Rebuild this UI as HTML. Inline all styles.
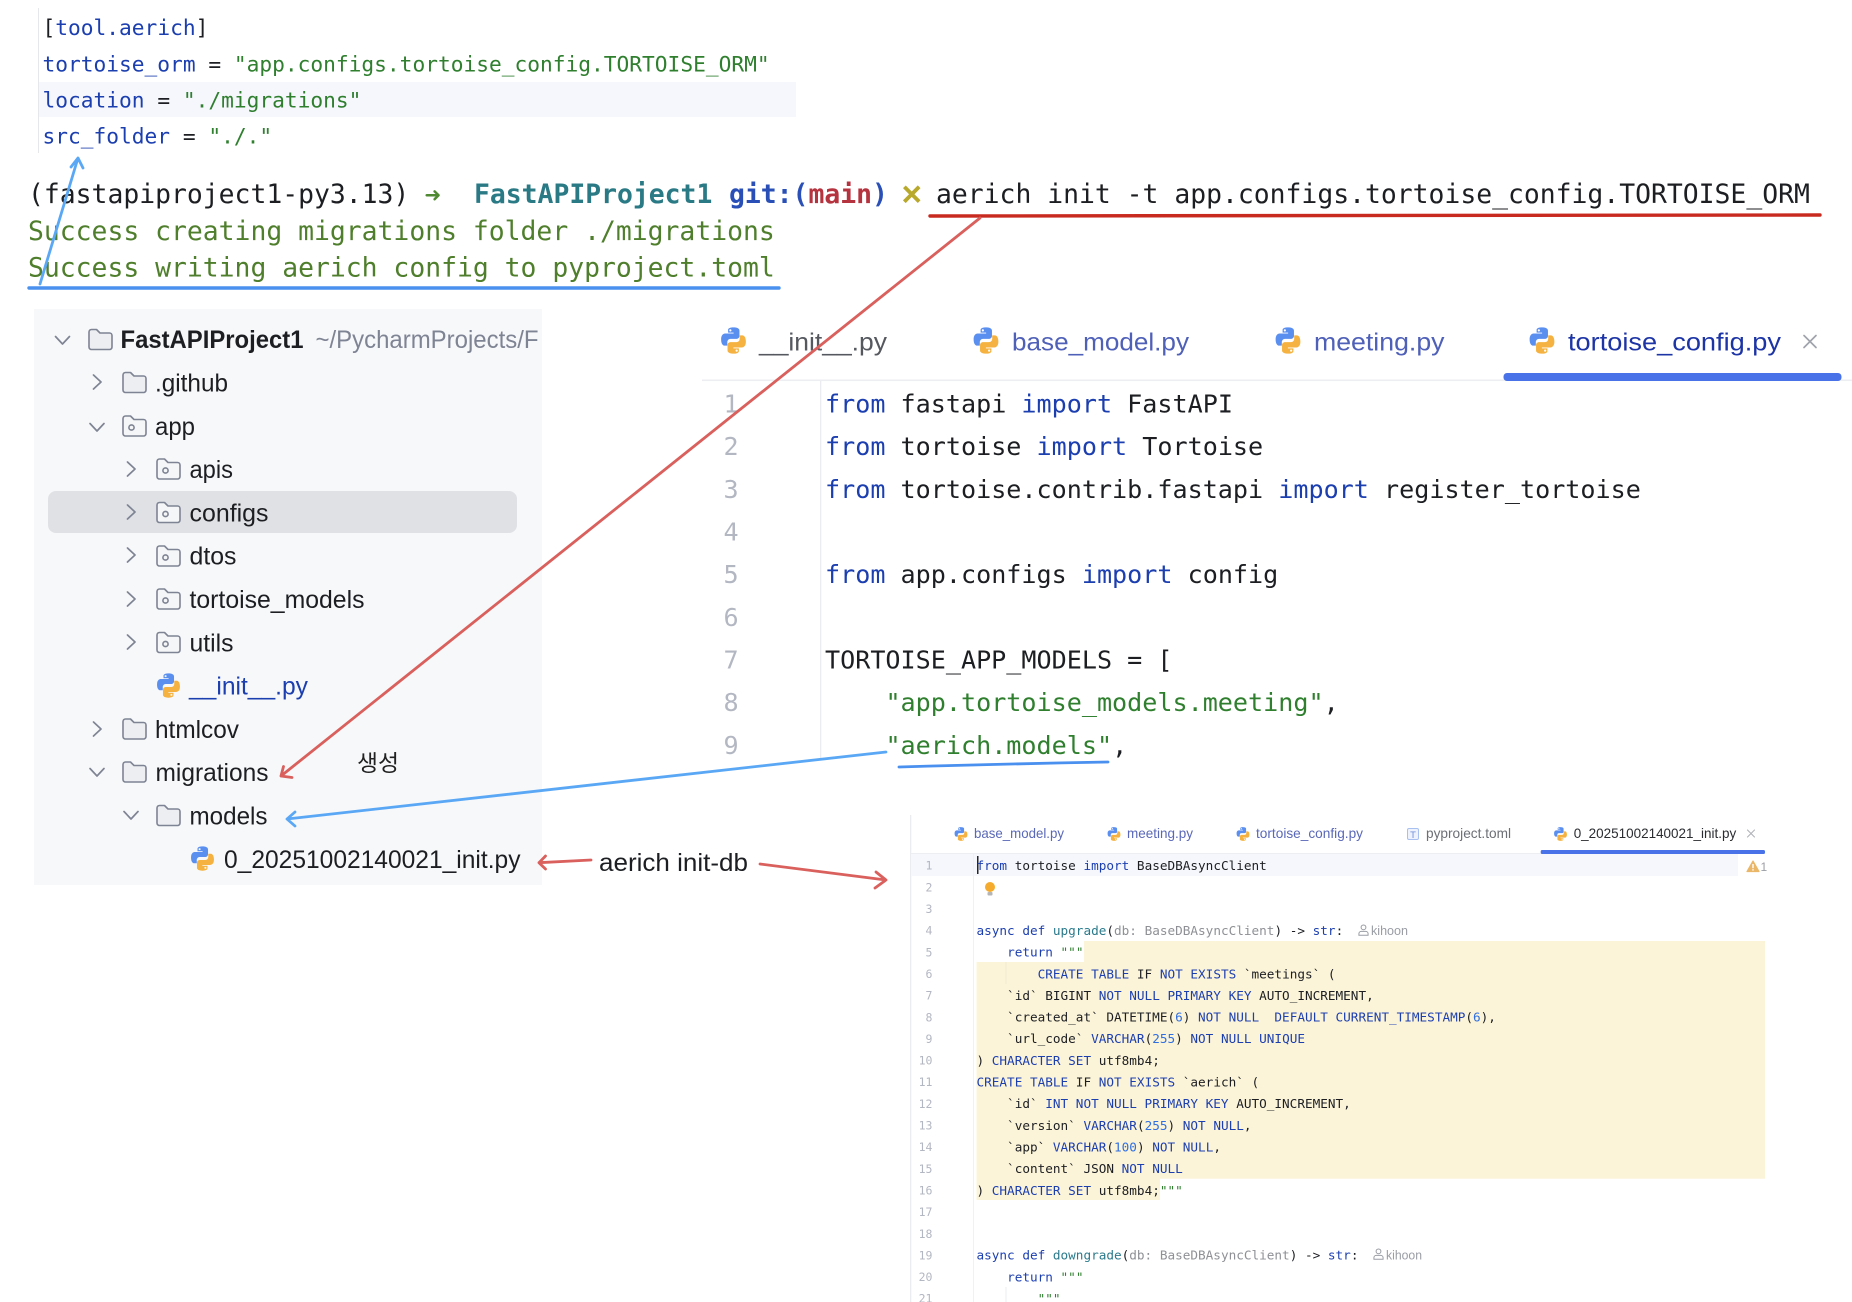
<!DOCTYPE html>
<html lang="ko"><head><meta charset="utf-8"><title>aerich init</title>
<style>
html,body{margin:0;padding:0;background:#fff;width:1852px;height:1302px;overflow:hidden}
svg{display:block}
text{white-space:pre}
.m{font-family:"DejaVu Sans Mono","Liberation Mono",monospace}
.s{font-family:"Liberation Sans",sans-serif}
.top{font-size:21.2px;fill:#1c1e22}
.term{font-size:26.4px;fill:#1c1e22}
.big{font-size:25.1px;fill:#1c1e22}
.sm{font-size:12.7px;fill:#1c1e22}
.tree{font-size:25px;fill:#1c1e22}
.tab{font-size:25px}
.stab{font-size:13.6px}
.k{fill:#1c3fb0}
.g{fill:#2f7f2f}
.n{fill:#2f6fe0}
.t{fill:#2a7a8c}
.h{fill:#8e9095}
.ln{fill:#b3b7c2;text-anchor:middle}
.hint{font-size:12.5px;fill:#9a9da5}
.red{stroke:#d9605c;fill:none;stroke-width:2.8;stroke-linecap:round;stroke-linejoin:round}
.blu{stroke:#5aa8f5;fill:none;stroke-width:2.8;stroke-linecap:round;stroke-linejoin:round}
</style></head>
<body>
<svg xmlns="http://www.w3.org/2000/svg" width="1852" height="1302" viewBox="0 0 1852 1302">
<defs>
<symbol id="py" viewBox="0 0 24 24">
<path fill="#5a8ff0" fill-rule="evenodd" d="M11.9.3C6.9.3 7.2 2.6 7.2 2.6V5h4.9v.8H4.9S1 5.4 1 11s3 5.6 3 5.6h2.5v-3s-.1-3 3-3h5s2.8 0 2.8-2.7V3.2S17.7.3 11.9.3zM9.2 2a1 1 0 1 1 0 2 1 1 0 0 1 0-2z"/>
<path fill="#f5b240" fill-rule="evenodd" transform="rotate(180 12 12)" d="M11.9.3C6.9.3 7.2 2.6 7.2 2.6V5h4.9v.8H4.9S1 5.4 1 11s3 5.6 3 5.6h2.5v-3s-.1-3 3-3h5s2.8 0 2.8-2.7V3.2S17.7.3 11.9.3zM9.2 2a1 1 0 1 1 0 2 1 1 0 0 1 0-2z"/>
</symbol>
<symbol id="fo" viewBox="0 0 25 22">
<path d="M1 3.5A2.5 2.5 0 0 1 3.5 1H8.5L12 4.5H21.5A2.5 2.5 0 0 1 24 7V18.5A2.5 2.5 0 0 1 21.5 21H3.5A2.5 2.5 0 0 1 1 18.5Z" fill="#eceef2" stroke="#7f8494" stroke-width="1.6" stroke-linejoin="round"/>
</symbol>
<symbol id="pk" viewBox="0 0 25 22">
<path d="M1 3.5A2.5 2.5 0 0 1 3.5 1H8.5L12 4.5H21.5A2.5 2.5 0 0 1 24 7V18.5A2.5 2.5 0 0 1 21.5 21H3.5A2.5 2.5 0 0 1 1 18.5Z" fill="#f5f6f8" stroke="#7f8494" stroke-width="1.6" stroke-linejoin="round"/>
<circle cx="9.5" cy="12.5" r="2.6" fill="none" stroke="#7f8494" stroke-width="1.6"/>
</symbol>
<symbol id="cr" viewBox="0 0 12 18"><path d="M2.5 2L10 9L2.5 16" fill="none" stroke="#7f8494" stroke-width="1.7" stroke-linecap="round" stroke-linejoin="round"/></symbol>
<symbol id="cd" viewBox="0 0 18 12"><path d="M2 2.5L9 10L16 2.5" fill="none" stroke="#7f8494" stroke-width="1.7" stroke-linecap="round" stroke-linejoin="round"/></symbol>
<symbol id="pe" viewBox="0 0 12 13"><circle cx="6" cy="3.6" r="2.6" fill="none" stroke="#9a9da5" stroke-width="1.1"/><path d="M1 12.2V10.5A2.5 2.5 0 0 1 3.5 8H8.5A2.5 2.5 0 0 1 11 10.5V12.2Z" fill="none" stroke="#9a9da5" stroke-width="1.1"/></symbol>
</defs>

<!-- top toml snippet -->
<rect x="39" y="82" width="757" height="35" fill="#f6f7fd"/>
<rect x="38" y="8" width="1" height="145" fill="#e6e7ea"/>
<g class="m top">
<text x="42.5" y="35">[<tspan class="k">tool.aerich</tspan>]</text>
<text x="42.5" y="71.5"><tspan class="k">tortoise_orm</tspan> = <tspan class="g">"app.configs.tortoise_config.TORTOISE_ORM"</tspan></text>
<text x="42.5" y="107.7"><tspan class="k">location</tspan> = <tspan class="g">"./migrations"</tspan></text>
<text x="42.5" y="143.5"><tspan class="k">src_folder</tspan> = <tspan class="g">"./."</tspan></text>
</g>

<!-- terminal -->
<g class="m term">
<text x="28" y="203">(fastapiproject1-py3.13)</text>
<text x="424.5" y="204.5" style="fill:#4f8a32;font-weight:bold;font-size:27px">➜</text>
<text x="474" y="203" style="fill:#2a7a85;font-weight:bold">FastAPIProject1</text>
<text x="729" y="203" style="fill:#2a50b8;font-weight:bold">git:(<tspan style="fill:#b5333f">main</tspan>)</text>
<text x="901.5" y="206" class="s" style="fill:#b8a82c;font-weight:bold;font-size:35px;font-family:'Liberation Sans',sans-serif">×</text>
<text x="936" y="203">aerich init -t app.configs.tortoise_config.TORTOISE_ORM</text>
<text x="28" y="240" style="fill:#4f7f2c">Success creating migrations folder ./migrations</text>
<text x="28" y="276.5" style="fill:#4f7f2c">Success writing aerich config to pyproject.toml</text>
</g>
<path d="M29 288L779 288" stroke="#4a90ee" stroke-width="3.4" stroke-linecap="round"/>
<path d="M930 216L1820 215" stroke="#c92a20" stroke-width="3.4" stroke-linecap="round"/>

<!-- project tree -->
<rect x="34" y="309" width="508" height="576" fill="#f7f8fa"/>
<rect x="48" y="491" width="469" height="42" rx="8" fill="#dfe1e5"/>
<use href="#cd" x="53.5" y="334" width="18" height="12"/>
<use href="#fo" x="88" y="328.5" width="25" height="22"/>
<use href="#cr" x="91" y="373" width="12" height="18"/>
<use href="#fo" x="122" y="371.5" width="25" height="22"/>
<use href="#cd" x="88" y="421" width="18" height="12"/>
<use href="#pk" x="122" y="415" width="25" height="22"/>
<use href="#cr" x="125" y="460" width="12" height="18"/>
<use href="#pk" x="156" y="458" width="25" height="22"/>
<use href="#cr" x="125" y="503" width="12" height="18"/>
<use href="#pk" x="156" y="501.5" width="25" height="22"/>
<use href="#cr" x="125" y="546" width="12" height="18"/>
<use href="#pk" x="156" y="545" width="25" height="22"/>
<use href="#cr" x="125" y="590" width="12" height="18"/>
<use href="#pk" x="156" y="588" width="25" height="22"/>
<use href="#cr" x="125" y="633" width="12" height="18"/>
<use href="#pk" x="156" y="631.5" width="25" height="22"/>
<use href="#py" x="156" y="673" width="25" height="25"/>
<use href="#cr" x="91" y="720" width="12" height="18"/>
<use href="#fo" x="122" y="718" width="25" height="22"/>
<use href="#cd" x="88" y="766" width="18" height="12"/>
<use href="#fo" x="122" y="761" width="25" height="22"/>
<use href="#cd" x="122" y="809" width="18" height="12"/>
<use href="#fo" x="156" y="804.5" width="25" height="22"/>
<use href="#py" x="190" y="846" width="25" height="25"/>
<g class="s tree">
<text x="120.5" y="348" font-weight="bold" textLength="183" lengthAdjust="spacingAndGlyphs">FastAPIProject1</text>
<text x="315.5" y="348" style="fill:#7f8494" textLength="223" lengthAdjust="spacingAndGlyphs">~/PycharmProjects/F</text>
<text x="155" y="391.5" textLength="73" lengthAdjust="spacingAndGlyphs">.github</text>
<text x="155" y="434.8" textLength="40" lengthAdjust="spacingAndGlyphs">app</text>
<text x="189.5" y="478" textLength="43.5" lengthAdjust="spacingAndGlyphs">apis</text>
<text x="189.5" y="521.3" textLength="79" lengthAdjust="spacingAndGlyphs">configs</text>
<text x="189.5" y="564.6" textLength="47" lengthAdjust="spacingAndGlyphs">dtos</text>
<text x="189.5" y="608" textLength="175" lengthAdjust="spacingAndGlyphs">tortoise_models</text>
<text x="189.5" y="651.3" textLength="44" lengthAdjust="spacingAndGlyphs">utils</text>
<text x="189" y="694.6" style="fill:#1c3fb0" textLength="119" lengthAdjust="spacingAndGlyphs">__init__.py</text>
<text x="155" y="738" textLength="84" lengthAdjust="spacingAndGlyphs">htmlcov</text>
<text x="155.5" y="781.2" textLength="113" lengthAdjust="spacingAndGlyphs">migrations</text>
<text x="189.5" y="824.5" textLength="78" lengthAdjust="spacingAndGlyphs">models</text>
<text x="224" y="867.8" textLength="296.5" lengthAdjust="spacingAndGlyphs">0_20251002140021_init.py</text>
</g>
<text x="357" y="771" font-size="23" fill="#222" font-family="'Liberation Sans','Noto Sans CJK KR',sans-serif" textLength="42" lengthAdjust="spacingAndGlyphs">생성</text>
<text x="599" y="871" class="s" font-size="25" fill="#1c1e22" textLength="149" lengthAdjust="spacingAndGlyphs">aerich init-db</text>

<!-- big editor -->
<rect x="702" y="379.5" width="1150" height="1.6" fill="#eceef2"/>
<rect x="820" y="381" width="1.3" height="378" fill="#ebecf0"/>
<rect x="1503.5" y="373" width="338" height="8" rx="3.5" fill="#4a72e8"/>
<use href="#py" x="719.5" y="327" width="28" height="27"/>
<use href="#py" x="972" y="327" width="28" height="27"/>
<use href="#py" x="1274" y="327" width="28" height="27"/>
<use href="#py" x="1528" y="327" width="28" height="27"/>
<g class="s tab">
<text x="759" y="350.7" fill="#55585f" textLength="128" lengthAdjust="spacingAndGlyphs">__init__.py</text>
<text x="1012" y="350.7" fill="#4f60b8" textLength="177" lengthAdjust="spacingAndGlyphs">base_model.py</text>
<text x="1314" y="350.7" fill="#4f60b8" textLength="130.5" lengthAdjust="spacingAndGlyphs">meeting.py</text>
<text x="1568" y="350.7" fill="#1c34a6" textLength="213" lengthAdjust="spacingAndGlyphs">tortoise_config.py</text>
</g>
<path d="M1804 335.5L1816 347.5M1816 335.5L1804 347.5" stroke="#a0a3ab" stroke-width="1.7" stroke-linecap="round"/>
<g class="m big">
<g class="ln">
<text x="731" y="412.5">1</text><text x="731" y="455.2">2</text><text x="731" y="497.8">3</text><text x="731" y="540.5">4</text><text x="731" y="583.2">5</text><text x="731" y="625.8">6</text><text x="731" y="668.5">7</text><text x="731" y="711.2">8</text><text x="731" y="753.8">9</text>
</g>
<text x="825" y="412.5"><tspan class="k">from</tspan> fastapi <tspan class="k">import</tspan> FastAPI</text>
<text x="825" y="455.2"><tspan class="k">from</tspan> tortoise <tspan class="k">import</tspan> Tortoise</text>
<text x="825" y="497.8"><tspan class="k">from</tspan> tortoise.contrib.fastapi <tspan class="k">import</tspan> register_tortoise</text>
<text x="825" y="583.2"><tspan class="k">from</tspan> app.configs <tspan class="k">import</tspan> config</text>
<text x="825" y="668.5">TORTOISE_APP_MODELS = [</text>
<text x="825" y="711.2">    <tspan class="g">"app.tortoise_models.meeting"</tspan>,</text>
<text x="825" y="753.8">    <tspan class="g">"aerich.models"</tspan>,</text>
</g>
<path d="M899 767Q1000 764 1108 762" class="blu" stroke-width="3" style="stroke:#4a90ee"/>

<!-- small editor -->
<rect x="910" y="815" width="1.3" height="487" fill="#ebecf0"/>
<rect x="911" y="853" width="854" height="1" fill="#eceef2"/>
<rect x="911" y="854" width="827" height="22" fill="#f5f7fd"/>
<rect x="973" y="854" width="1" height="448" fill="#f0f1f4"/>
<path d="M1084 941H1765V1178.7H1160V1200H976.5V962H1084Z" fill="#fcf4d9"/>
<rect x="1540.7" y="850" width="224.3" height="4" rx="1.5" fill="#4a72e8"/>
<rect x="1005.5" y="962" width="1" height="22" fill="#f0ead2"/>
<rect x="1005.5" y="1287" width="1" height="15" fill="#ebecf0"/>
<rect x="977" y="856" width="1.5" height="18" fill="#23252b"/>
<use href="#py" x="954" y="827" width="14" height="14"/>
<use href="#py" x="1107" y="827" width="14" height="14"/>
<use href="#py" x="1236" y="827" width="14" height="14"/>
<rect x="1407.5" y="828.5" width="11" height="11" rx="1.5" fill="#eef2fd" stroke="#a8c0f0" stroke-width="1"/>
<text x="1413" y="838" text-anchor="middle" class="s" font-size="9.5" fill="#6f8fd8">T</text>
<use href="#py" x="1553.5" y="827" width="14" height="14"/>
<g class="s stab">
<text x="974" y="838" fill="#5a68b8" textLength="90" lengthAdjust="spacingAndGlyphs">base_model.py</text>
<text x="1127" y="838" fill="#5a68b8" textLength="66" lengthAdjust="spacingAndGlyphs">meeting.py</text>
<text x="1256" y="838" fill="#5a68b8" textLength="107" lengthAdjust="spacingAndGlyphs">tortoise_config.py</text>
<text x="1426" y="838" fill="#6c6f75" textLength="85" lengthAdjust="spacingAndGlyphs">pyproject.toml</text>
<text x="1573.7" y="838" fill="#2a2c30" textLength="162.5" lengthAdjust="spacingAndGlyphs">0_20251002140021_init.py</text>
</g>
<path d="M1747.5 830L1754.5 837M1754.5 830L1747.5 837" stroke="#b0b3ba" stroke-width="1.1" stroke-linecap="round"/>
<path d="M1753 861L1759 871.5H1747Z" fill="#eab768" stroke="#eab768" stroke-width="1.2" stroke-linejoin="round"/>
<rect x="1752.3" y="864" width="1.4" height="4.2" fill="#fff"/><rect x="1752.3" y="869.2" width="1.4" height="1.4" fill="#fff"/>
<text x="1760.5" y="871" class="s" font-size="12" fill="#9a9da5">1</text>
<circle cx="990" cy="887" r="5" fill="#f5ac2e"/><rect x="987.5" y="892" width="5" height="3.5" rx="1" fill="#b5b5b5"/>
<g class="m sm">
<g class="ln" style="font-size:11.5px">
<text x="929" y="869.5">1</text><text x="929" y="891.5">2</text><text x="929" y="913">3</text><text x="929" y="934.7">4</text><text x="929" y="956.3">5</text><text x="929" y="978">6</text><text x="929" y="999.6">7</text><text x="929" y="1021.3">8</text><text x="929" y="1042.9">9</text><text x="925.5" y="1064.6">10</text><text x="925.5" y="1086.2">11</text><text x="925.5" y="1107.9">12</text><text x="925.5" y="1129.5">13</text><text x="925.5" y="1151.2">14</text><text x="925.5" y="1172.8">15</text><text x="925.5" y="1194.5">16</text><text x="925.5" y="1216.1">17</text><text x="925.5" y="1237.8">18</text><text x="925.5" y="1259.4">19</text><text x="925.5" y="1281">20</text><text x="925.5" y="1302.5">21</text>
</g>
<text x="976.5" y="870"><tspan class="k">from</tspan> tortoise <tspan class="k">import</tspan> BaseDBAsyncClient</text>
<text x="976.5" y="935"><tspan class="k">async def</tspan> <tspan class="t">upgrade</tspan>(<tspan class="h">db: BaseDBAsyncClient</tspan>) -&gt; <tspan class="k">str</tspan>:</text>
<text x="976.5" y="956.6">    <tspan class="k">return</tspan> <tspan class="g">"""</tspan></text>
<text x="976.5" y="978.3">        <tspan class="k">CREATE TABLE</tspan> IF <tspan class="k">NOT EXISTS</tspan> `meetings` (</text>
<text x="976.5" y="999.9">    `id` BIGINT <tspan class="k">NOT NULL PRIMARY KEY</tspan> AUTO_INCREMENT,</text>
<text x="976.5" y="1021.6">    `created_at` DATETIME(<tspan class="n">6</tspan>) <tspan class="k">NOT NULL  DEFAULT CURRENT_TIMESTAMP</tspan>(<tspan class="n">6</tspan>),</text>
<text x="976.5" y="1043.2">    `url_code` <tspan class="k">VARCHAR</tspan>(<tspan class="n">255</tspan>) <tspan class="k">NOT NULL UNIQUE</tspan></text>
<text x="976.5" y="1064.9">) <tspan class="k">CHARACTER SET</tspan> utf8mb4;</text>
<text x="976.5" y="1086.5"><tspan class="k">CREATE TABLE</tspan> IF <tspan class="k">NOT EXISTS</tspan> `aerich` (</text>
<text x="976.5" y="1108.2">    `id` <tspan class="k">INT NOT NULL PRIMARY KEY</tspan> AUTO_INCREMENT,</text>
<text x="976.5" y="1129.8">    `version` <tspan class="k">VARCHAR</tspan>(<tspan class="n">255</tspan>) <tspan class="k">NOT NULL</tspan>,</text>
<text x="976.5" y="1151.5">    `app` <tspan class="k">VARCHAR</tspan>(<tspan class="n">100</tspan>) <tspan class="k">NOT NULL</tspan>,</text>
<text x="976.5" y="1173.1">    `content` JSON <tspan class="k">NOT NULL</tspan></text>
<text x="976.5" y="1194.8">) <tspan class="k">CHARACTER SET</tspan> utf8mb4;<tspan class="g">"""</tspan></text>
<text x="976.5" y="1259.7"><tspan class="k">async def</tspan> <tspan class="t">downgrade</tspan>(<tspan class="h">db: BaseDBAsyncClient</tspan>) -&gt; <tspan class="k">str</tspan>:</text>
<text x="976.5" y="1281.4">    <tspan class="k">return</tspan> <tspan class="g">"""</tspan></text>
<text x="976.5" y="1303">        <tspan class="g">"""</tspan></text>
</g>
<use href="#pe" x="1358" y="924" width="11" height="12"/>
<text x="1371" y="935" class="s hint" textLength="37" lengthAdjust="spacingAndGlyphs">kihoon</text>
<use href="#pe" x="1373" y="1248" width="11" height="12"/>
<text x="1386" y="1259.5" class="s hint" textLength="36" lengthAdjust="spacingAndGlyphs">kihoon</text>

<!-- annotations -->
<path d="M40 284L78 158M71 167L78 158L83 168" class="blu"/>
<path d="M980 218L281 776M283.5 766.5L281 776L292 777.5" class="red"/>
<path d="M886 752L287 819M295 812L287 819L295 826" class="blu"/>
<path d="M591 860L539 862.7M545.5 856L539 862.7L545.5 869" class="red"/>
<path d="M760 864L886 880M876 872L886 880L875 888" class="red"/>
</svg>
</body></html>
